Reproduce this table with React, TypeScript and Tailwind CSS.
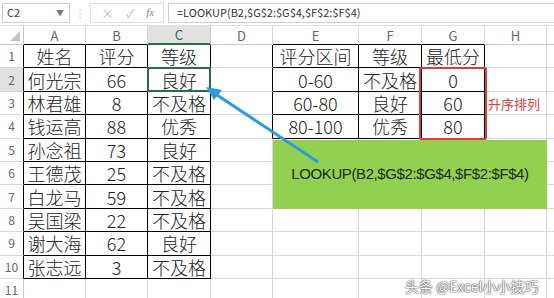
const cols = ["A", "B", "C", "D", "E", "F", "G", "H", ""];

const scores: string[][] = [
  ["姓名", "评分", "等级"],
  ["何光宗", "66", "良好"],
  ["林君雄", "8", "不及格"],
  ["钱运高", "88", "优秀"],
  ["孙念祖", "73", "良好"],
  ["王德茂", "25", "不及格"],
  ["白龙马", "59", "不及格"],
  ["吴国梁", "22", "不及格"],
  ["谢大海", "62", "良好"],
  ["张志远", "3", "不及格"],
];

const levels: string[][] = [
  ["评分区间", "等级", "最低分"],
  ["0-60", "不及格", "0"],
  ["60-80", "良好", "60"],
  ["80-100", "优秀", "80"],
];

const inTable = (r: number, c: number) =>
  (r >= 1 && r <= 10 && c >= 0 && c <= 2) || (r >= 1 && r <= 4 && c >= 4 && c <= 6);

function cellText(r: number, c: number) {
  if (r >= 1 && r <= 10 && c <= 2) return scores[r - 1][c];
  if (r >= 1 && r <= 4 && c >= 4 && c <= 6) return levels[r - 1][c - 4];
  return "";
}

function Toolbar() {
  return (
    <div className="flex h-[26px] items-center gap-[4px] border-b border-[#e1e1e1] pl-[2px] text-[11px] text-[#444]">
      <div className="flex h-[20px] w-[68px] items-center justify-between border border-[#d0d0d0] pl-[4px] pr-[5px]">
        <span>C2</span>
        <span className="text-[8px] text-[#777]">▼</span>
      </div>
      <span className="w-[12px] text-center text-[10px] text-[#aaa]">⋮</span>
      <div className="flex h-[20px] w-[74px] items-center gap-[12px] border border-[#e0e0e0] pl-[10px] text-[#bbb]">
        <span className="text-[13px]">×</span>
        <span className="text-[12px]">✓</span>
        <span className="font-['Liberation_Serif'] text-[11px] italic text-[#888]">fx</span>
      </div>
      <div className="flex h-[20px] flex-1 items-center border border-r-0 border-[#d0d0d0] pl-[8px] text-[#333]">
        =LOOKUP(B2,$G$2:$G$4,$F$2:$F$4)
      </div>
    </div>
  );
}

function Sheet() {
  const rows = Array.from({ length: 11 }, (_, i) => i + 1);
  return (
    <div className="grid grid-cols-[24px_62px_62px_63px_62px_86px_63px_63px_62px_62px] grid-rows-[19px_repeat(11,23.4px)]">
      <div className="relative border-b border-r border-[#c8c8c8]">
        <div className="absolute bottom-[3px] right-[3px] h-0 w-0 border-b-[10px] border-l-[10px] border-b-[#c4c4c4] border-l-transparent" />
      </div>
      {cols.map((h, c) => (
        <div
          key={h + c}
          className={
            "flex items-center justify-center border-r text-[13px] leading-none " +
            (c === 2
              ? "border-b-2 border-r-[#c8c8c8] border-b-[#217346] bg-[#e1e1e1] text-[#217346]"
              : inTable(1, c)
                ? "border-b border-r-[#d8d8d8] border-b-black text-[#666]"
                : "border-b border-r-[#d8d8d8] border-b-[#c8c8c8] text-[#666]")
          }
        >
          {h}
        </div>
      ))}
      {rows.map((r) => (
        <Row key={r} r={r} />
      ))}
    </div>
  );
}

function Row({ r }: { r: number }) {
  return (
    <>
      <div
        className={
          "flex items-center justify-center border-b border-r border-b-[#d8d8d8] text-[12px] text-[#666] " +
          (inTable(r, 0) ? "border-r-black " : "border-r-[#c8c8c8] ") +
          (r === 2 ? "bg-[#e1e1e1]" : "")
        }
      >
        {r}
      </div>
      {cols.map((_, c) => (
        <div
          key={c}
          className={
            "relative flex items-center justify-center border-b border-r text-[18px] font-light leading-none text-[#222] " +
            (inTable(r, c) || inTable(r, c + 1) ? "border-r-black " : "border-r-[#d8d8d8] ") +
            (inTable(r, c) || inTable(r + 1, c) ? "border-b-black" : "border-b-[#d8d8d8]")
          }
        >
          {cellText(r, c)}
          {r === 2 && c === 2 && (
            <div className="absolute inset-[-1px] border-2 border-[#217346]" />
          )}
        </div>
      ))}
    </>
  );
}

export default function App() {
  return (
    <div className="relative h-[298px] w-[554px] overflow-hidden bg-white font-['Noto_Sans_CJK_SC','Liberation_Sans',sans-serif]">
      <Toolbar />
      <Sheet />

      {/* red box round the lowest scores */}
      <div className="absolute left-[419px] top-[67px] h-[73px] w-[68px] rounded-[2px] border-2 border-[#e33b3b]" />
      <div className="absolute left-[488px] top-[94px] text-[13px] text-[#e33b3b]">升序排列</div>

      {/* green note */}
      <div className="absolute left-[273px] top-[140px] flex h-[69px] w-[274px] items-center justify-center bg-[#92d050] font-['Liberation_Sans',sans-serif] text-[15px] tracking-[-0.4px] text-[#1c2a12]">
        LOOKUP(B2,$G$2:$G$4,$F$2:$F$4)
      </div>

      <svg className="absolute left-0 top-0" width="554" height="298">
        <line x1="318" y1="162" x2="214" y2="93" stroke="#2d9be3" strokeWidth="3" />
        <polygon points="206,87 222,90 214,100" fill="#2d9be3" />
      </svg>

      <div className="absolute left-[405px] top-[276px] text-[14px] text-white [text-shadow:0_0_2px_#333,0_0_1px_#333]">
        头条 @Excel小小技巧
      </div>
    </div>
  );
}
